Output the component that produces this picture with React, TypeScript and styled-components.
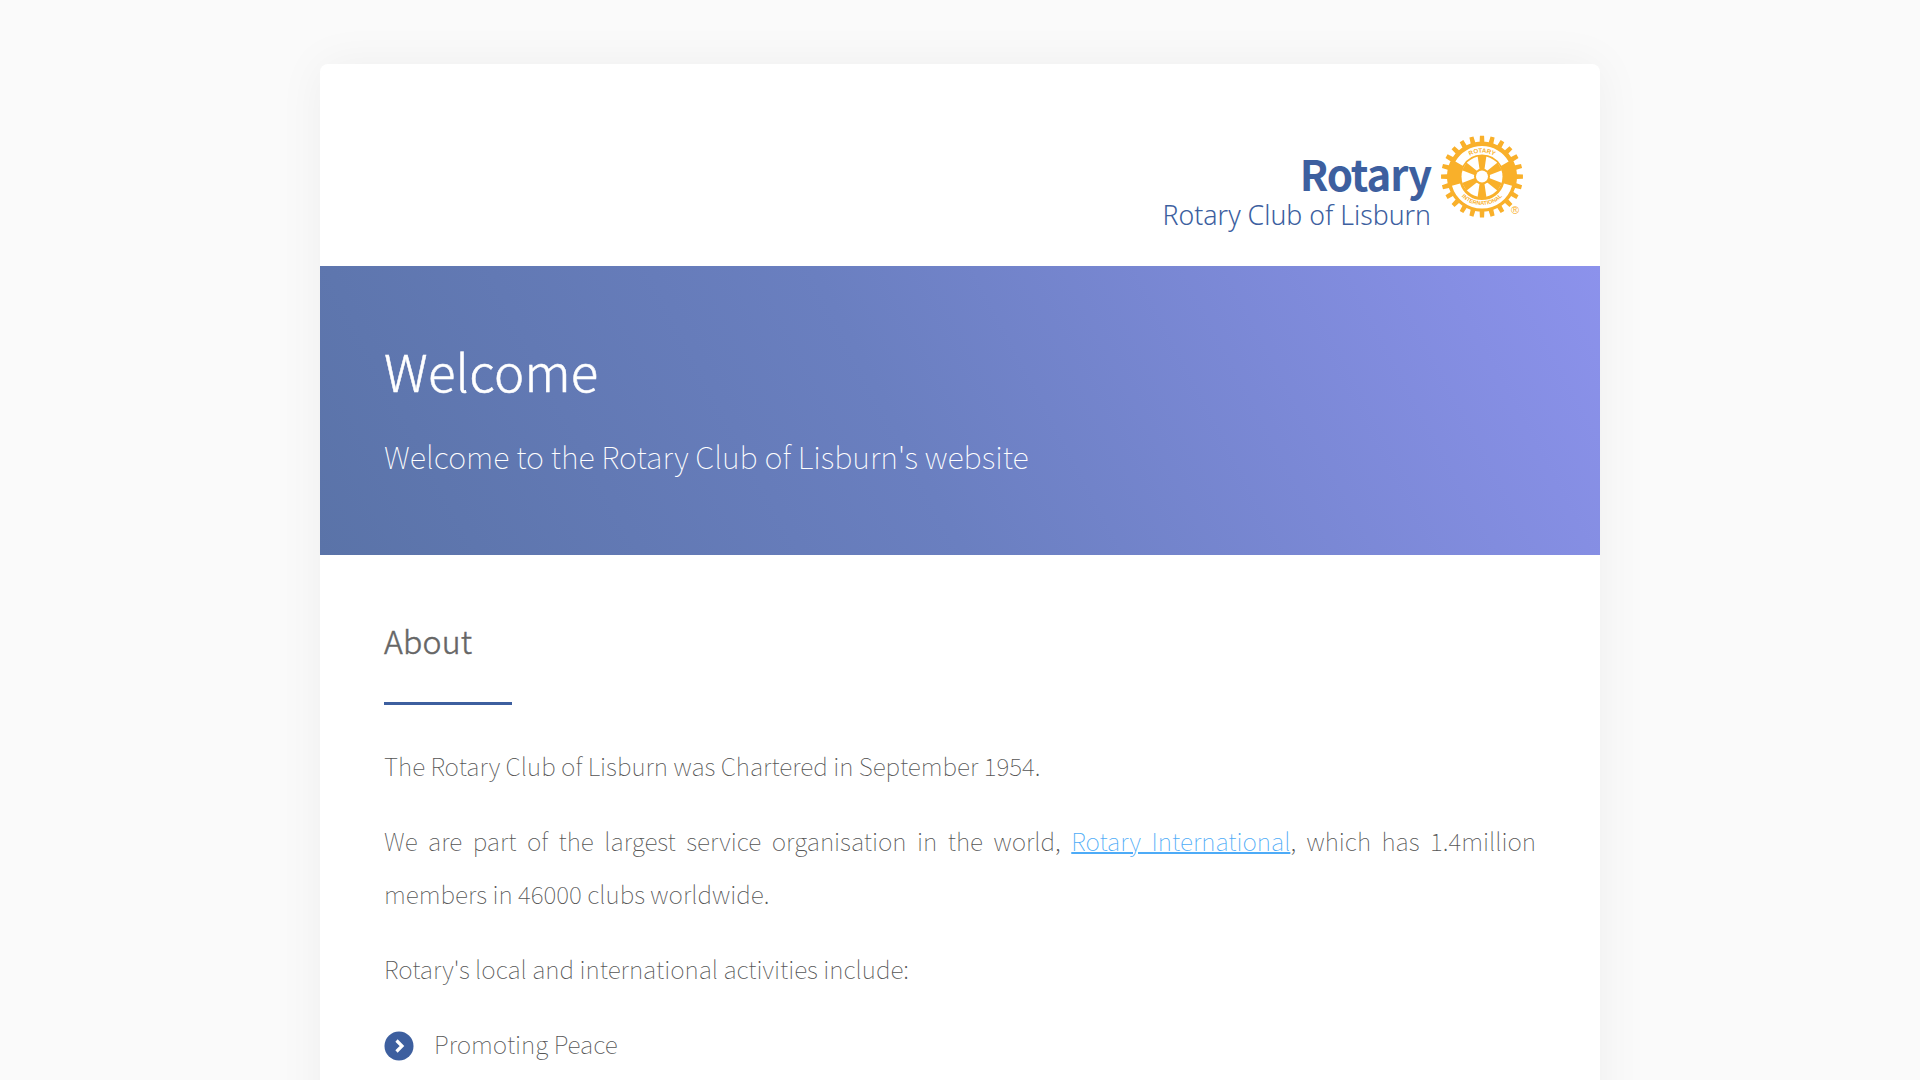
import React from "react";
import styled, { createGlobalStyle } from "styled-components";

const BODY_FONT = `"Noto Sans CJK SC", "Noto Sans", sans-serif`;
const BLUE = "#3d5f9f";
const GOLD = "#f9b02a";

const Global = createGlobalStyle`
  html, body { margin: 0; padding: 0; height: 100%; overflow: hidden; background: #fafafa; }
  * { box-sizing: border-box; }
`;

const Page = styled.div`
  padding: 64px 320px 0;
  font-family: ${BODY_FONT};
  font-weight: 100;
  color: #555;
`;

const Card = styled.main`
  background: #fff;
  border-radius: 8px 8px 0 0;
  box-shadow: 0 0 48px rgba(0, 0, 0, 0.05);
  overflow: hidden;
`;

const Header = styled.header`
  height: 202px;
  padding: 70px 76px 0 0;
  display: flex;
  justify-content: flex-end;
`;

const Logo = styled.div`
  display: grid;
  grid-template-columns: auto 84px;
  column-gap: 9px;
  color: ${BLUE};
`;

const LogoText = styled.div`
  display: flex;
  flex-direction: column;
  align-items: flex-end;
`;

const LogoMark = styled.span`
  font-family: ${BODY_FONT};
  font-weight: 700;
  font-size: 42px;
  line-height: 40px;
  margin-top: 19px;
  letter-spacing: -1.1px;
`;

const LogoClub = styled.span`
  font-family: "Noto Sans", sans-serif;
  font-weight: 300;
  font-size: 26.7px;
  line-height: 30px;
  margin-top: 7px;
  white-space: nowrap;
`;

const Banner = styled.section`
  height: 289px;
  padding: 62px 64px 0;
  color: #fff;
  background: linear-gradient(62deg, #5a73a8 0%, #6a7fc0 45%, #8c92ec 100%);
`;

const Title = styled.h1`
  margin: 0;
  font-size: 51px;
  font-weight: 300;
  line-height: 84px;
  letter-spacing: 0.2px;
  -webkit-text-stroke: 0.5px #fff;
`;

const Subtitle = styled.p`
  margin: 20px 0 0;
  font-size: 30.6px;
  font-weight: 100;
  line-height: 48px;
`;

const Content = styled.section`
  padding: 61px 64px 120px;
  font-size: 24.5px;
  line-height: 52.8px;
`;

const Heading = styled.h2`
  margin: 0;
  font-size: 32px;
  font-weight: 300;
  line-height: 48px;
  color: #666;
  letter-spacing: 0.2px;
  -webkit-text-stroke: 0.5px #666;
  &::after {
    content: "";
    display: block;
    width: 128px;
    height: 3px;
    margin-top: 38px;
    background: ${BLUE};
  }
`;

const Para = styled.p`
  margin: 0 0 22px;
  text-align: justify;
`;

const Intro = styled(Para)`
  margin-top: 35px;
`;

const Middle = styled(Para)`
  margin-bottom: 23px;
`;

const Link = styled.a`
  color: #4dabf7;
  text-decoration: underline;
  text-decoration-thickness: 1.5px;
`;

const List = styled.ul`
  list-style: none;
  margin: 4px 0 0;
  padding: 0;
`;

const Item = styled.li`
  display: flex;
  align-items: center;
  gap: 20px;
`;

const Bullet = styled.svg`
  width: 30px;
  height: 30px;
  flex: none;
  margin-top: 2px;
`;

function gearPath(cx: number, cy: number, teeth: number, rOut: number, rIn: number) {
  const pts: string[] = [];
  const step = (Math.PI * 2) / teeth;
  for (let i = 0; i < teeth; i++) {
    const a = i * step - Math.PI / 2;
    const w = step * 0.26;
    [
      [a - step / 2 + w * 0.4, rIn],
      [a - w, rIn],
      [a - w * 0.75, rOut],
      [a + w * 0.75, rOut],
      [a + w, rIn],
      [a + step / 2 - w * 0.4, rIn],
    ].forEach(([t, r]) => pts.push(`${(cx + r * Math.cos(t)).toFixed(2)},${(cy + r * Math.sin(t)).toFixed(2)}`));
  }
  return `M${pts.join("L")}Z`;
}

const Wheel = () => (
  <svg width="84" height="84" viewBox="0 -0.6 84 84">
    <path d={gearPath(42, 42, 24, 41, 35)} fill={GOLD} />
    <path d="M19 29 A26.5 26.5 0 0 1 65 29" fill="none" stroke="#fff" strokeWidth="8.4" />
    <path d="M16 50 A27 27 0 0 0 68 50" fill="none" stroke="#fff" strokeWidth="8.4" />
    <circle cx="42" cy="42" r="20.5" fill="#fff" />
    {[0, 60, 120, 180, 240, 300].map((d) => (
      <path key={d} d="M40.6 42 L37.6 21.5 H46.4 L43.4 42 Z" fill={GOLD} transform={`rotate(${d} 42 42)`} />
    ))}
    <circle cx="42" cy="42" r="8" fill={GOLD} />
    <circle cx="42" cy="42" r="6" fill="#fff" />
    <defs>
      <path id="arcTop" d="M18 42 A24 24 0 0 1 66 42" />
      <path id="arcBottom" d="M13.5 42 A28.5 28.5 0 0 0 70.5 42" />
    </defs>
    <text fontFamily="'Liberation Sans', sans-serif" fontSize="6.2" fontWeight="700" fill={GOLD} textAnchor="middle">
      <textPath href="#arcTop" startOffset="50%">ROTARY</textPath>
    </text>
    <text fontFamily="'Liberation Sans', sans-serif" fontSize="5.6" fontWeight="700" fill={GOLD} textAnchor="middle">
      <textPath href="#arcBottom" startOffset="50%">INTERNATIONAL</textPath>
    </text>
  </svg>
);

const WheelBox = styled.div`
  position: relative;
  width: 84px;
  height: 84px;
`;

const Registered = styled.span`
  position: absolute;
  right: 5px;
  bottom: 2px;
  font-family: "Liberation Sans", sans-serif;
  font-size: 11px;
  line-height: 11px;
  color: ${GOLD};
`;

export default function App() {
  return (
    <>
      <Global />
      <Page>
        <Card>
          <Header>
            <Logo>
              <LogoText>
                <LogoMark>Rotary</LogoMark>
                <LogoClub>Rotary Club of Lisburn</LogoClub>
              </LogoText>
              <WheelBox>
                <Wheel />
                <Registered>®</Registered>
              </WheelBox>
            </Logo>
          </Header>
          <Banner>
            <Title>Welcome</Title>
            <Subtitle>Welcome to the Rotary Club of Lisburn's website</Subtitle>
          </Banner>
          <Content>
            <Heading>About</Heading>
            <Intro>The Rotary Club of Lisburn was Chartered in September 1954.</Intro>
            <Middle>
              We are part of the largest service organisation in the world, <Link href="#">Rotary International</Link>, which has 1.4million members in 46000 clubs worldwide.
            </Middle>
            <Para>Rotary's local and international activities include:</Para>
            <List>
              <Item>
                <Bullet viewBox="0 0 30 30">
                  <circle cx="15" cy="15" r="14.5" fill={BLUE} />
                  <path d="M12.5 9.5 L18 15 L12.5 20.5" fill="none" stroke="#fff" strokeWidth="3.2" />
                </Bullet>
                Promoting Peace
              </Item>
            </List>
          </Content>
        </Card>
      </Page>
    </>
  );
}
